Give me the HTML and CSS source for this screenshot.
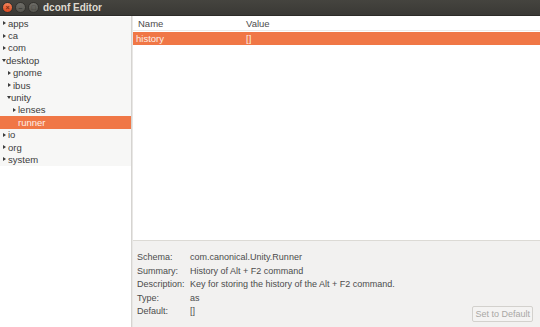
FILE: index.html
```html
<!DOCTYPE html>
<html lang="en">
<head>
    <meta charset="UTF-8">
    <title>dconf Editor</title>
    <link rel="stylesheet" href="styles.css">
</head>
<body>
    <div class="window">
        <div class="titlebar">
            <span class="wbtn close">&#215;</span>
            <span class="wbtn">&#8211;</span>
            <span class="wbtn">&#9633;</span>
            <span class="title">dconf Editor</span>
        </div>
        <div class="main">
            <div class="tree">
                <div class="node l1"><span class="arrow closed"></span><span class="label">apps</span></div>
                <div class="node l1"><span class="arrow closed"></span><span class="label">ca</span></div>
                <div class="node l1"><span class="arrow closed"></span><span class="label">com</span></div>
                <div class="node l1"><span class="arrow open"></span><span class="label">desktop</span></div>
                <div class="node l2"><span class="arrow closed"></span><span class="label">gnome</span></div>
                <div class="node l2"><span class="arrow closed"></span><span class="label">ibus</span></div>
                <div class="node l2"><span class="arrow open"></span><span class="label">unity</span></div>
                <div class="node l3"><span class="arrow closed"></span><span class="label">lenses</span></div>
                <div class="node l3 selected"><span class="arrow leaf"></span><span class="label">runner</span></div>
                <div class="node l1"><span class="arrow closed"></span><span class="label">io</span></div>
                <div class="node l1"><span class="arrow closed"></span><span class="label">org</span></div>
                <div class="node l1"><span class="arrow closed"></span><span class="label">system</span></div>
            </div>
            <div class="content">
                <div class="keys">
                    <div class="keys-head">
                        <span class="col-name">Name</span>
                        <span class="col-value">Value</span>
                    </div>
                    <div class="key-row selected">
                        <span class="col-name">history</span>
                        <span class="col-value">[]</span>
                    </div>
                </div>
                <div class="info">
                    <div class="info-grid">
                        <span>Schema:</span><span>com.canonical.Unity.Runner</span>
                        <span>Summary:</span><span>History of Alt + F2 command</span>
                        <span>Description:</span><span>Key for storing the history of the Alt + F2 command.</span>
                        <span>Type:</span><span>as</span>
                        <span>Default:</span><span>[]</span>
                    </div>
                    <button class="btn" disabled>Set to Default</button>
                </div>
            </div>
        </div>
    </div>
</body>
</html>
```

FILE: styles.css
```css
* {
    margin: 0;
    padding: 0;
    box-sizing: border-box;
}

body {
    width: 540px;
    height: 327px;
    overflow: hidden;
    font-family: "Liberation Sans", Arial, sans-serif;
    font-size: 9px;
    color: #3c3c3c;
    background-color: #f2f1f0;
}

.window {
    display: flex;
    flex-direction: column;
    height: 327px;
}

/* Title bar */
.titlebar {
    height: 16px;
    display: flex;
    align-items: center;
    padding-left: 2px;
    gap: 2px;
    background: linear-gradient(#45443f, #3a3935);
    border-bottom: 1px solid #2c2b28;
}

.wbtn {
    width: 11px;
    height: 11px;
    border-radius: 50%;
    background: linear-gradient(#6e6d68, #57564f);
    border: 1px solid #33322e;
    color: #3c3b37;
    font-size: 7px;
    line-height: 9px;
    text-align: center;
    font-weight: bold;
}

.wbtn.close {
    background: linear-gradient(#f2845c, #dd4a1f);
    color: #7a2a10;
}

.title {
    margin-left: 2px;
    color: #dfdbd2;
    font-weight: bold;
    font-size: 10px;
}

.main {
    flex: 1;
    display: flex;
}

/* Tree */
.tree {
    width: 132px;
    background-color: #fff;
    border-right: 1px solid #d6d4d1;
    padding-top: 1px;
}

.node {
    height: 12.4px;
    display: flex;
    align-items: center;
    background-color: #f7f7f6;
    white-space: nowrap;
}

.node.l1 { padding-left: 3px; }
.node.l2 { padding-left: 8px; }
.node.l3 { padding-left: 13px; }

.node.selected {
    background-color: #f07746;
    color: #fdeee6;
}

.label {
    flex: none;
    font-size: 9.5px;
}

.arrow {
    flex: none;
    display: block;
    width: 0;
    height: 0;
}

.arrow.closed {
    border-left: 3px solid #3c3c3c;
    border-top: 2.5px solid transparent;
    border-bottom: 2.5px solid transparent;
    margin: 0 2px 0 0;
}

.arrow.open {
    border-top: 3px solid #3c3c3c;
    border-left: 2.5px solid transparent;
    border-right: 2.5px solid transparent;
    margin: 0 0 0 -1px;
}

.arrow.leaf {
    width: 5px;
}

/* Keys */
.content {
    flex: 1;
    display: flex;
    flex-direction: column;
    border-left: 1px solid #e8e7e5;
}

.keys {
    flex: 1;
    background-color: #fff;
    border-bottom: 1px solid #dcdad5;
    font-size: 9.5px;
}

.keys-head {
    height: 15px;
    display: flex;
    align-items: center;
    border-bottom: 1px solid #ecebe9;
    color: #4c4c4c;
}

.keys-head .col-name {
    padding-left: 5px;
}

.key-row {
    height: 13px;
    display: flex;
    align-items: center;
    margin-top: 1px;
}

.key-row.selected {
    background-color: #f07746;
    color: #fdeee6;
}

.key-row .col-name {
    padding-left: 3px;
}

.col-name {
    width: 113px;
}

/* Info panel */
.info {
    height: 86px;
    padding: 10px 0 0 4px;
    position: relative;
    background-color: #f2f1f0;
}

.info-grid {
    display: grid;
    grid-template-columns: 53px auto;
    line-height: 13.5px;
    color: #4c4c4c;
}

.btn {
    position: absolute;
    right: 7px;
    bottom: 5px;
    height: 16px;
    padding: 0 2px;
    font-family: inherit;
    font-size: 9px;
    color: #a9a8a5;
    background-color: #f4f3f2;
    border: 1px solid #d3d1cd;
    border-radius: 2px;
}
```
